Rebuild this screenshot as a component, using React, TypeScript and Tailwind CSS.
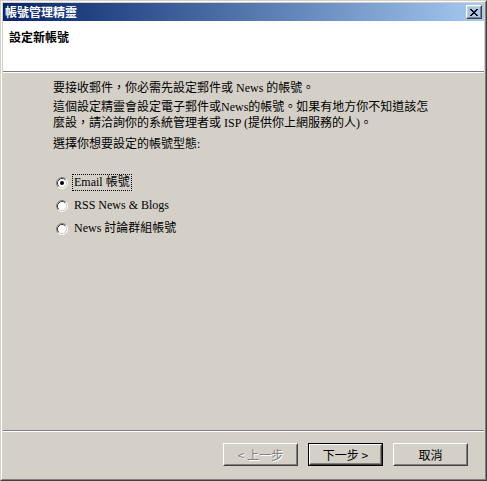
import React from 'react';

const font = "font-['Liberation_Serif','Noto_Sans_CJK_TC',serif]";

const CloseX = () => (
  <svg width="8" height="7" viewBox="0 0 8 7" shapeRendering="crispEdges">
    <path
      d="M0 0h2v1H0zM6 0h2v1H6zM1 1h2v1H1zM5 1h2v1H5zM2 2h4v1H2zM3 3h2v1H3zM2 4h4v1H2zM1 5h2v1H1zM5 5h2v1H5zM0 6h2v1H0zM6 6h2v1H6z"
      fill="#000"
    />
  </svg>
);

const Radio = ({ checked }: { checked?: boolean }) => (
  <svg width="12" height="12" viewBox="0 0 12 12" className="shrink-0">
    <circle cx="6" cy="6" r="4.5" fill="#fff" />
    <path d="M2.11 9.89A5.5 5.5 0 0 1 9.89 2.11" stroke="#808080" fill="none" />
    <path d="M9.89 2.11A5.5 5.5 0 0 1 2.11 9.89" stroke="#fff" fill="none" />
    <path d="M2.82 9.18A4.5 4.5 0 0 1 9.18 2.82" stroke="#404040" fill="none" />
    <path d="M9.18 2.82A4.5 4.5 0 0 1 2.82 9.18" stroke="#d4d0c8" fill="none" />
    {checked && <circle cx="6" cy="6" r="2" fill="#000" />}
  </svg>
);

const Button = ({
  label,
  isDefault,
  disabled,
}: {
  label: string;
  isDefault?: boolean;
  disabled?: boolean;
}) => {
  const bevel = (
    <div className="h-full border border-t-white border-l-white border-r-[#404040] border-b-[#404040]">
      <div
        className={`h-full flex items-center justify-center border border-t-[#d4d0c8] border-l-[#d4d0c8] border-r-[#808080] border-b-[#808080] text-[12px] leading-[14px] ${
          disabled ? 'text-[#808080] [text-shadow:1px_1px_0_#fff]' : 'text-black'
        }`}
      >
        {label}
      </div>
    </div>
  );
  if (isDefault) {
    return <div className="w-[75px] h-[23px] border border-black">{bevel}</div>;
  }
  return <div className="w-[75px] h-[23px]">{bevel}</div>;
};

const options = [
  { label: 'Email 帳號', checked: true },
  { label: 'RSS News & Blogs' },
  { label: 'News 討論群組帳號' },
];

export default function App() {
  return (
    <div className={`w-[487px] h-[481px] bg-[#d4d0c8] border border-t-[#d4d0c8] border-l-[#d4d0c8] border-r-[#404040] border-b-[#404040] ${font}`}>
      <div className="h-full border border-t-white border-l-white border-r-[#808080] border-b-[#808080] p-px flex flex-col">
        {/* title bar */}
        <div className="h-[18px] shrink-0 flex items-center justify-between pl-[2px] pr-[2px] bg-gradient-to-r from-[#0a246a] to-[#a6caf0]">
          <span className="text-white font-bold text-[12px] leading-[14px] font-['Noto_Sans_CJK_TC',sans-serif]">帳號管理精靈</span>
          <div className="w-[16px] h-[14px] border border-t-white border-l-white border-r-[#404040] border-b-[#404040]">
            <div className="h-full flex items-center justify-center border border-t-[#d4d0c8] border-l-[#d4d0c8] border-r-[#808080] border-b-[#808080]">
              <CloseX />
            </div>
          </div>
        </div>

        {/* header */}
        <div className="h-[50px] shrink-0 bg-white pl-[6px] pt-[8px]">
          <div className="font-bold text-[12px] leading-[16px] text-black font-['Noto_Sans_CJK_TC',sans-serif]">設定新帳號</div>
        </div>
        <div className="h-px shrink-0 bg-[#808080]" />
        <div className="h-px shrink-0 bg-white" />

        {/* body */}
        <div className="flex-1 pl-[50px] pt-[7px] text-[12px] leading-[16px] text-black">
          <p>要接收郵件，你必需先設定郵件或 News 的帳號。</p>
          <p className="mt-[3px]">
            這個設定精靈會設定電子郵件或News的帳號。如果有地方你不知道該怎
            <br />
            麼設，請洽詢你的系統管理者或 ISP (提供你上網服務的人)。
          </p>
          <p className="mt-[5px]">選擇你想要設定的帳號型態:</p>

          <div className="mt-[19px] flex flex-col">
            {options.map((o) => (
              <div key={o.label} className="h-[23px] flex items-center pl-[3px] gap-[4px]">
                <Radio checked={o.checked} />
                <span className={`px-px leading-[15px] border ${o.checked ? 'border-dotted border-black' : 'border-transparent'}`}>
                  {o.label}
                </span>
              </div>
            ))}
          </div>
        </div>

        {/* footer */}
        <div className="h-px shrink-0 bg-[#808080]" />
        <div className="h-px shrink-0 bg-white" />
        <div className="h-[46px] shrink-0 flex justify-end items-start pt-[11px] pr-[16px] gap-[10px] font-['Noto_Sans_CJK_TC',sans-serif]">
          <Button label="< 上一步" disabled />
          <Button label="下一步 >" isDefault />
          <Button label="取消" />
        </div>
      </div>
    </div>
  );
}
